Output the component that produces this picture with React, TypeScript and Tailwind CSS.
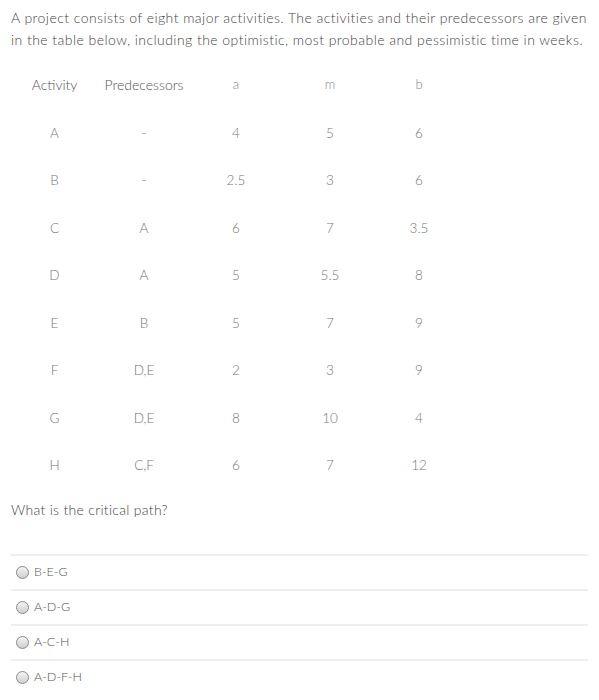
import React from "react";

const rows = [
  ["A", "-", "4", "5", "6"],
  ["B", "-", "2.5", "3", "6"],
  ["C", "A", "6", "7", "3.5"],
  ["D", "A", "5", "5.5", "8"],
  ["E", "B", "5", "7", "9"],
  ["F", "D,E", "2", "3", "9"],
  ["G", "D,E", "8", "10", "4"],
  ["H", "C,F", "6", "7", "12"],
];

const options = ["B-E-G", "A-D-G", "A-C-H", "A-D-F-H"];

export default function App() {
  return (
    <div className="w-[599px] h-[700px] bg-white text-[#555] pt-[7px]" style={{ fontFamily: "Lato, 'Noto Sans', sans-serif" }}>
      <p className="pl-[11px] pr-[4px] text-[14px] leading-[22px] tracking-[0.45px] font-light text-[#444]">
        A project consists of eight major activities. The activities and their predecessors are given in the table below, including the optimistic, most probable and pessimistic time in weeks.
      </p>
      <div className="mt-[23px] pl-[22px] text-[14px] font-light text-[#555]">
        <div className="grid grid-cols-[65px_114px_70px_118px_60px] h-[20px] items-center">
          <div className="text-center">Activity</div>
          <div className="text-center">Predecessors</div>
          <div className="text-center text-[#888] text-[13px]">a</div>
          <div className="text-center text-[#888] text-[13px]">m</div>
          <div className="text-center text-[#888] text-[13px]">b</div>
        </div>
        <div className="mt-[15px]">
          {rows.map((r) => (
            <div key={r[0]} className="grid grid-cols-[65px_114px_70px_118px_60px] h-[47.5px] items-center text-[13.5px] text-[#777]">
              {r.map((c, i) => (
                <div key={i} className="text-center">{c}</div>
              ))}
            </div>
          ))}
        </div>
      </div>
      <p className="pl-[11px] mt-[10px] text-[14px] tracking-[0.3px] font-light text-[#444]">What is the critical path?</p>
      <div className="mx-[11px] mt-[34px]">
        {options.map((o) => (
          <div key={o} className="flex items-center h-[35px] border-t-2 border-[#eee] pl-[5px] gap-[5px]">
            <span className="w-[13px] h-[13px] rounded-full border border-[#888] bg-gradient-to-b from-[#f4f4f4] to-[#cfcfcf]" />
            <span className="text-[12.5px] font-light text-[#555]">{o}</span>
          </div>
        ))}
      </div>
    </div>
  );
}
